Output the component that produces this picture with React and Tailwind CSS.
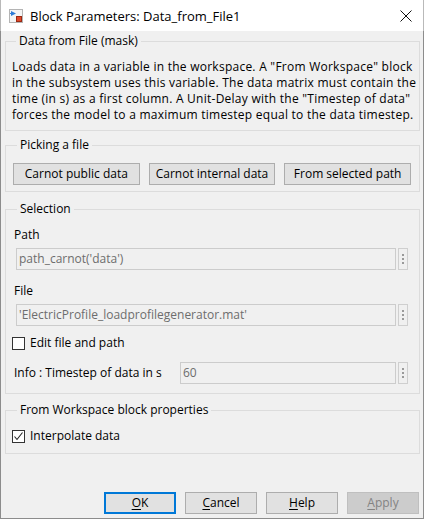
import React from "react";

// Win10 style "Block Parameters" dialog

function BlockIcon() {
  return (
    <svg width="14" height="14" viewBox="0 0 14 14">
      <rect x="0.5" y="0.5" width="13" height="13" fill="#f4f4f4" stroke="#b4b4b4" />
      <path d="M2 2 L7 4.5 L2 7 Z" fill="#2d7bd6" />
      <path d="M2 4.5 H1" stroke="#2d7bd6" />
      <rect x="7.5" y="7.5" width="5" height="5" fill="#e0482a" stroke="#9a2a14" />
    </svg>
  );
}

function Group({ title, className, children }) {
  return (
    <fieldset className={`border border-[#dcdcdc] ${className}`}>
      <legend className="ml-[4px] px-[3px] leading-[16px] text-black">{title}</legend>
      {children}
    </fieldset>
  );
}

function Dots() {
  return (
    <div className="w-[10px] h-[22px] border border-[#cfcfcf] bg-[#f0f0f0] flex flex-col items-center justify-center gap-[2px]">
      <span className="w-[2px] h-[2px] bg-[#9a9a9a]" />
      <span className="w-[2px] h-[2px] bg-[#9a9a9a]" />
      <span className="w-[2px] h-[2px] bg-[#9a9a9a]" />
    </div>
  );
}

function Field({ value, className = "" }) {
  return (
    <div className={`flex gap-[2px] mr-[3px] ${className}`}>
      <div className="flex-1 h-[22px] border border-[#cccccc] bg-[#f0f0f0] pl-[2px] flex items-center text-[#6d6d6d] whitespace-nowrap overflow-hidden">
        {value}
      </div>
      <Dots />
    </div>
  );
}

function Check({ checked, label, className = "" }) {
  return (
    <div className={`flex items-center h-[16px] ${className}`}>
      <span className="w-[13px] h-[13px] border border-[#333333] bg-white flex items-center justify-center">
        {checked && (
          <svg width="11" height="11" viewBox="0 0 11 11">
            <path d="M1.5 5.5 L4 8.5 L9.5 1.5" fill="none" stroke="#222" strokeWidth="1.1" />
          </svg>
        )}
      </span>
      <span className="ml-[5px] leading-[16px]">{label}</span>
    </div>
  );
}

function Btn({ children, primary, disabled, className = "" }) {
  let look = "border border-[#adadad] bg-[#e1e1e1] text-black";
  if (primary) look = "border-2 border-[#0078d7] bg-[#e1e1e1] text-black";
  if (disabled) look = "border border-[#bfbfbf] bg-[#cccccc] text-[#838383]";
  return (
    <div className={`h-[22px] flex items-center justify-center leading-[16px] ${look} ${className}`}>
      {children}
    </div>
  );
}

export default function App() {
  return (
    <div
      className="w-[424px] h-[519px] flex flex-col text-[12px] text-black bg-white"
      style={{ fontFamily: '"Segoe UI", "Open Sans", sans-serif' }}
    >
      {/* Title bar */}
      <div className="h-[31px] bg-white flex items-center border-x border-[#b9b9b9]">
        <div className="ml-[8px]">
          <BlockIcon />
        </div>
        <span className="ml-[7px] text-[13px] leading-[16px]">Block Parameters: Data_from_File1</span>
        <svg className="ml-auto mr-[11px]" width="12" height="12" viewBox="0 0 12 12">
          <path d="M0.5 0.5 L11.5 11.5 M11.5 0.5 L0.5 11.5" stroke="#111" strokeWidth="1" />
        </svg>
      </div>

      {/* Body */}
      <div className="flex-1 bg-[#f0f0f0] border-x border-b border-[#8c8c8c] flex flex-col pl-[4px] pr-[3px]">
        <Group title="Data from File (mask)" className="mt-[2px] pt-[10px] pb-[7px] pl-[6px]">
          <div className="leading-[16px] tracking-[0.25px] whitespace-nowrap">
            Loads data in a variable in the workspace. A "From Workspace" block
            <br />
            in the subsystem uses this variable. The data matrix must contain the
            <br />
            time (in s) as a first column. A Unit-Delay with the "Timestep of data"
            <br />
            forces the model to a maximum timestep equal to the data timestep.
          </div>
        </Group>

        <Group title="Picking a file" className="mt-[6px] pt-[10px] pb-[6px] pl-[7px] pr-[8px]">
          <div className="grid grid-cols-3 gap-[9px]">
            <Btn>Carnot public data</Btn>
            <Btn>Carnot internal data</Btn>
            <Btn>From selected path</Btn>
          </div>
        </Group>

        <Group title="Selection" className="mt-[9px] pt-[10px] pb-[9px] pl-[7px] pr-[8px]">
          <div className="leading-[16px] pl-[1px]">Path</div>
          <Field value="path_carnot('data')" className="mt-[5px] ml-[3px]" />
          <div className="leading-[16px] mt-[13px] pl-[1px]">File</div>
          <Field value="'ElectricProfile_loadprofilegenerator.mat'" className="mt-[5px] ml-[3px]" />
          <Check label="Edit file and path" className="mt-[9px] -ml-[1px]" />
          <div className="flex items-center mt-[11px]">
            <span className="w-[167px] pl-[1px] leading-[16px] whitespace-nowrap">Info : Timestep of data in s</span>
            <Field value="60" className="flex-1" />
          </div>
        </Group>

        <Group title="From Workspace block properties" className="mt-[8px] pt-[10px] pb-[9px] pl-[7px]">
          <Check checked label="Interpolate data" className="-ml-[1px]" />
        </Group>

        <div className="mt-auto mb-[4px] mr-[1px] flex justify-end gap-[9px]">
          <Btn primary className="w-[72px]">
            <span className="underline underline-offset-2">O</span>K
          </Btn>
          <Btn className="w-[72px]">
            <span className="underline underline-offset-2">C</span>ancel
          </Btn>
          <Btn className="w-[72px]">
            <span className="underline underline-offset-2">H</span>elp
          </Btn>
          <Btn disabled className="w-[72px]">
            <span className="underline underline-offset-2">A</span>pply
          </Btn>
        </div>
      </div>
    </div>
  );
}
